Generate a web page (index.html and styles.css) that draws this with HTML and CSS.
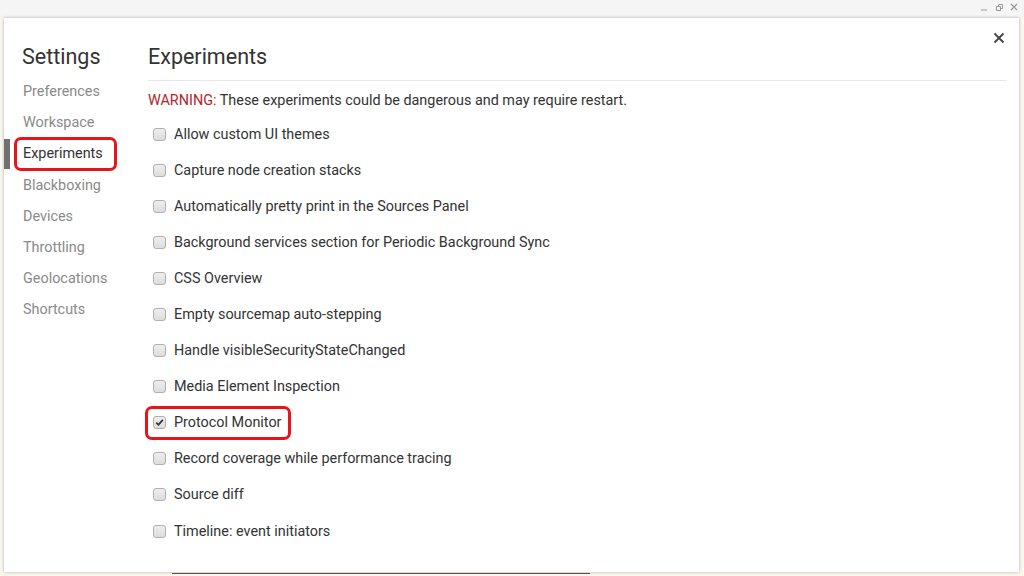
FILE: index.html
```html
<!DOCTYPE html>
<html>
<head>
<meta charset="utf-8">
<link rel="stylesheet" href="styles.css">
</head>
<body>
<div class="topbar">
  <div class="winctl">
    <svg width="10" height="10" viewBox="0 0 10 10"><path d="M2 8h6" stroke="#999" stroke-width="1"/></svg>
    <svg width="10" height="10" viewBox="0 0 10 10"><path d="M2.5 4.5h4v4h-4z M4.5 4.5v-2h4v4h-2" fill="none" stroke="#999" stroke-width="1"/></svg>
    <svg width="10" height="10" viewBox="0 0 10 10"><path d="M2 2l6 6M8 2l-6 6" stroke="#999" stroke-width="1.2"/></svg>
  </div>
</div>
<div class="dialog">
  <div class="sidebar">
    <div class="settings-title">Settings</div>
    <ul class="nav">
      <li>Preferences</li>
      <li>Workspace</li>
      <li class="selected"><span class="hl">Experiments</span></li>
      <li>Blackboxing</li>
      <li>Devices</li>
      <li>Throttling</li>
      <li>Geolocations</li>
      <li>Shortcuts</li>
    </ul>
  </div>
  <div class="main">
    <div class="header">
      <div class="title">Experiments</div>
      <div class="close">
        <svg width="12" height="12" viewBox="0 0 12 12"><path d="M1.5 1.5l9 9M10.5 1.5l-9 9" stroke="#444" stroke-width="1.8"/></svg>
      </div>
    </div>
    <div class="warning"><span class="warn">WARNING:</span> These experiments could be dangerous and may require restart.</div>
    <ul class="list">
      <li><span class="cb"></span>Allow custom UI themes</li>
      <li><span class="cb"></span>Capture node creation stacks</li>
      <li><span class="cb"></span>Automatically pretty print in the Sources Panel</li>
      <li><span class="cb"></span>Background services section for Periodic Background Sync</li>
      <li><span class="cb"></span>CSS Overview</li>
      <li><span class="cb"></span>Empty sourcemap auto-stepping</li>
      <li><span class="cb"></span>Handle visibleSecurityStateChanged</li>
      <li><span class="cb"></span>Media Element Inspection</li>
      <li><span class="hlrow"><span class="cb checked"><svg width="9" height="9" viewBox="0 0 9 9"><path d="M1.3 4.6l2.2 2.2L7.8 1.8" fill="none" stroke="#333" stroke-width="1.8"/></svg></span>Protocol Monitor</span></li>
      <li><span class="cb"></span>Record coverage while performance tracing</li>
      <li><span class="cb"></span>Source diff</li>
      <li><span class="cb"></span>Timeline: event initiators</li>
    </ul>
  </div>
</div>
<div class="bottom"><span class="bline"></span></div>
</body>
</html>
```
FILE: styles.css
```css
html, body {
  margin: 0;
  padding: 0;
}
body {
  width: 1024px;
  height: 576px;
  overflow: hidden;
  background: #faf8ee;
  font-family: Roboto, "Liberation Sans", sans-serif;
  color: #333;
}
.topbar {
  height: 18px;
  background: #f5f5f5;
  display: flex;
  justify-content: flex-end;
}
.winctl {
  display: flex;
  gap: 5px;
  padding: 2px 5px 0 0;
}
.dialog {
  margin: 0 5px 0 4px;
  height: 554px;
  background: #fff;
  box-shadow: 0 0 3px rgba(0, 0, 0, 0.3);
  display: flex;
}
.sidebar {
  width: 144px;
  flex: none;
  padding-top: 25px;
  box-sizing: border-box;
}
.settings-title {
  font-size: 21.5px;
  line-height: 28px;
  padding-left: 18px;
  color: #333;
}
.nav {
  list-style: none;
  margin: 5px 0 0;
  padding: 0;
}
.nav li {
  font-size: 14.4px;
  line-height: 31.2px;
  height: 31.2px;
  padding-left: 19px;
  color: #8a8a8a;
  position: relative;
}
.nav li.selected {
  color: #333;
}
.nav li.selected::before {
  content: "";
  position: absolute;
  left: 0;
  top: 1px;
  width: 6px;
  height: 30px;
  background: #707070;
}
.hl {
  display: inline-block;
  margin-left: -9px;
  padding: 0 11px 0 6px;
  height: 28px;
  line-height: 28px;
  border: 3px solid #e8141c;
  border-radius: 7px;
  margin-top: -1px;
  vertical-align: top;
}
.main {
  flex: 1;
  padding-right: 12px;
  padding-top: 25px;
}
.header {
  display: flex;
  justify-content: space-between;
  align-items: flex-start;
  border-bottom: 1px solid #e6e6e6;
  padding-bottom: 9px;
}
.title {
  font-size: 21.5px;
  line-height: 28px;
  color: #333;
}
.close {
  margin-top: -11px;
  margin-right: 2px;
  width: 12px;
  height: 12px;
}
.close svg {
  display: block;
}
.warning {
  font-size: 14.4px;
  line-height: 20px;
  margin-top: 10px;
  color: #333;
}
.warn {
  color: #b3262b;
}
.list {
  list-style: none;
  margin: 5px 0 0;
  padding: 0;
}
.list li {
  height: 36.1px;
  font-size: 14.4px;
  display: flex;
  align-items: center;
  padding-left: 5px;
}
.cb {
  width: 11px;
  height: 11px;
  border: 1px solid #b0b0b0;
  border-radius: 3px;
  background: linear-gradient(#eeeeee, #dcdcdc);
  margin-right: 8px;
  flex: none;
  display: flex;
  align-items: center;
  justify-content: center;
}
.cb svg {
  display: block;
}
.hlrow {
  display: flex;
  align-items: center;
  margin-left: -8px;
  padding: 0 7px 0 5px;
  height: 28px;
  border: 3px solid #e8141c;
  border-radius: 7px;
}
.bottom {
  height: 4px;
}
.bline {
  display: block;
  margin-left: 172px;
  width: 418px;
  height: 1px;
  background: #555;
  position: relative;
  top: 1px;
}
```
